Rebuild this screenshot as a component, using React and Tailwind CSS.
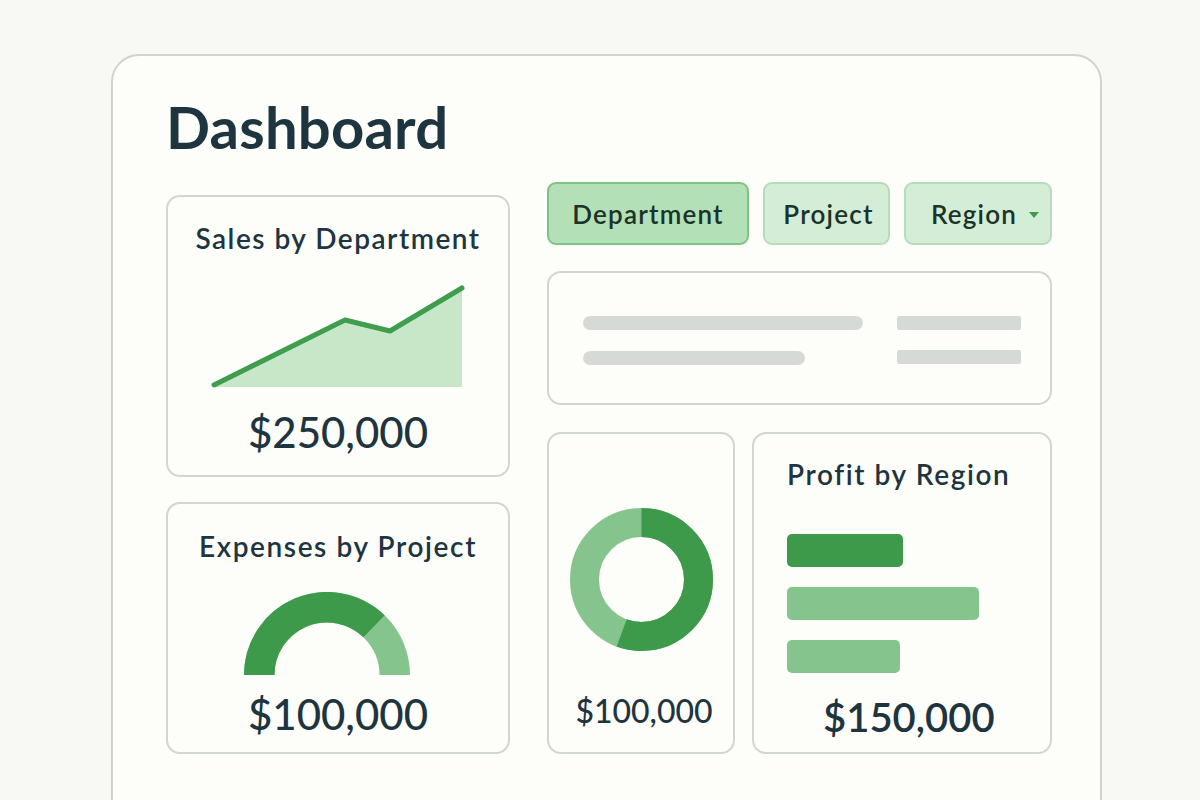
import React from 'react';

const ink = 'text-[#1e3540]';

function Card({ className = '', children }) {
  return (
    <div className={'rounded-[14px] border-2 border-[#d2d6d1] bg-[#fdfdfa] ' + className}>
      {children}
    </div>
  );
}

function Chip({ label, active, caret, className = '' }) {
  return (
    <div
      className={
        'h-[63px] rounded-[9px] border-2 flex items-center justify-center gap-[12px] text-[26px] font-semibold tracking-[1.2px] leading-none text-[#1b3329] ' +
        (active ? 'bg-[#b3e0b6] border-[#7cc285] ' : 'bg-[#d4edd6] border-[#b6ddb9] ') +
        className
      }
    >
      <span>{label}</span>
      {caret && (
        <svg width="10" height="6" viewBox="0 0 10 6" className="mt-[2px]">
          <path d="M0 0 H10 L5 6 Z" fill="#3f9a4c" />
        </svg>
      )}
    </div>
  );
}

export default function App() {
  return (
    <div
      className="w-[1200px] h-[800px] overflow-hidden bg-[#f8f8f5] pt-[54px] pl-[111px]"
      style={{ fontFamily: 'Lato, "Noto Sans", sans-serif' }}
    >
      <div className="w-[991px] h-[800px] rounded-[28px] border-2 border-[#cfd4cf] bg-[#fdfdfa] pl-[53px] pt-[42px]">
        <h1 className={'text-[58px] font-bold leading-none tracking-[0.2px] ' + ink}>Dashboard</h1>

        <div className="mt-[26px] flex gap-[37px]">
          {/* left column */}
          <div className="w-[344px] mt-[13px] flex flex-col gap-[25px]">
            <Card className="h-[282px] pt-[27px] flex flex-col items-center">
              <h2 className={'text-[28px] font-semibold tracking-[1.5px] leading-none ' + ink}>Sales by Department</h2>
              <svg width="256" height="106" viewBox="0 0 256 106" className="mt-[32px]">
                <polygon points="4,102 135,36 180,47 252,4 252,103 4,103" fill="#c8e7c9" />
                <polyline
                  points="4,101 135,36 180,47 252,4"
                  fill="none"
                  stroke="#3f9d4d"
                  strokeWidth="5"
                  strokeLinecap="round"
                  strokeLinejoin="round"
                />
              </svg>
              <div className={'mt-[21px] text-[42px] font-medium leading-none ' + ink}>$250,000</div>
            </Card>

            <Card className="h-[252px] pt-[28px] flex flex-col items-center">
              <h2 className={'text-[28px] font-semibold tracking-[1.6px] leading-none ' + ink}>Expenses by Project</h2>
              <svg width="166" height="83" viewBox="0 0 166 83" className="mt-[32px] mr-[22px]">
                <path d="M15.25 83 A67.75 67.75 0 0 1 150.75 83" fill="none" stroke="#86c48d" strokeWidth="30.5" />
                <path d="M15.25 83 A67.75 67.75 0 0 1 130.06 34.26" fill="none" stroke="#3d9a4b" strokeWidth="30.5" />
              </svg>
              <div className={'mt-[18px] text-[42px] font-medium leading-none ' + ink}>$100,000</div>
            </Card>
          </div>

          {/* right column */}
          <div className="w-[505px] flex flex-col">
            <div className="flex gap-[14px]">
              <Chip label="Department" active className="w-[202px]" />
              <Chip label="Project" className="w-[127px] pl-[4px]" />
              <Chip label="Region" caret className="w-[148px] pl-[14px]" />
            </div>

            <Card className="mt-[26px] h-[134px] pt-[43px] pl-[34px] pr-[29px] flex justify-between">
              <div className="flex flex-col gap-[21px]">
                <div className="w-[280px] h-[14px] rounded-full bg-[#d6dad6]" />
                <div className="w-[222px] h-[14px] rounded-full bg-[#d6dad6]" />
              </div>
              <div className="flex flex-col gap-[20px]">
                <div className="w-[124px] h-[14px] rounded-[2px] bg-[#d6dad6]" />
                <div className="w-[124px] h-[14px] rounded-[2px] bg-[#d6dad6]" />
              </div>
            </Card>

            <div className="mt-[27px] flex gap-[17px]">
              <Card className="w-[188px] h-[322px] pt-[74px] flex flex-col items-center">
                <svg width="143" height="143" viewBox="0 0 143 143">
                  <circle cx="71.5" cy="71.5" r="57" fill="none" stroke="#86c48d" strokeWidth="29" />
                  <circle
                    cx="71.5"
                    cy="71.5"
                    r="57"
                    fill="none"
                    stroke="#3d9a4b"
                    strokeWidth="29"
                    strokeDasharray="199 400"
                    transform="rotate(-90 71.5 71.5)"
                  />
                </svg>
                <div className={'mt-[44px] ml-[6px] text-[32px] font-medium leading-none ' + ink}>$100,000</div>
              </Card>

              <Card className="w-[300px] h-[322px] pt-[26px] pl-[33px] flex flex-col">
                <h2 className={'text-[28px] font-semibold tracking-[1.6px] leading-none ' + ink}>Profit by Region</h2>
                <div className="mt-[46px] flex flex-col gap-[20px]">
                  <div className="w-[116px] h-[33px] rounded-[5px] bg-[#3d9a4b]" />
                  <div className="w-[192px] h-[33px] rounded-[5px] bg-[#86c48d]" />
                  <div className="w-[113px] h-[33px] rounded-[5px] bg-[#86c48d]" />
                </div>
                <div className={'mt-[24px] ml-[36px] text-[40px] font-semibold leading-none ' + ink}>$150,000</div>
              </Card>
            </div>
          </div>
        </div>
      </div>
    </div>
  );
}
